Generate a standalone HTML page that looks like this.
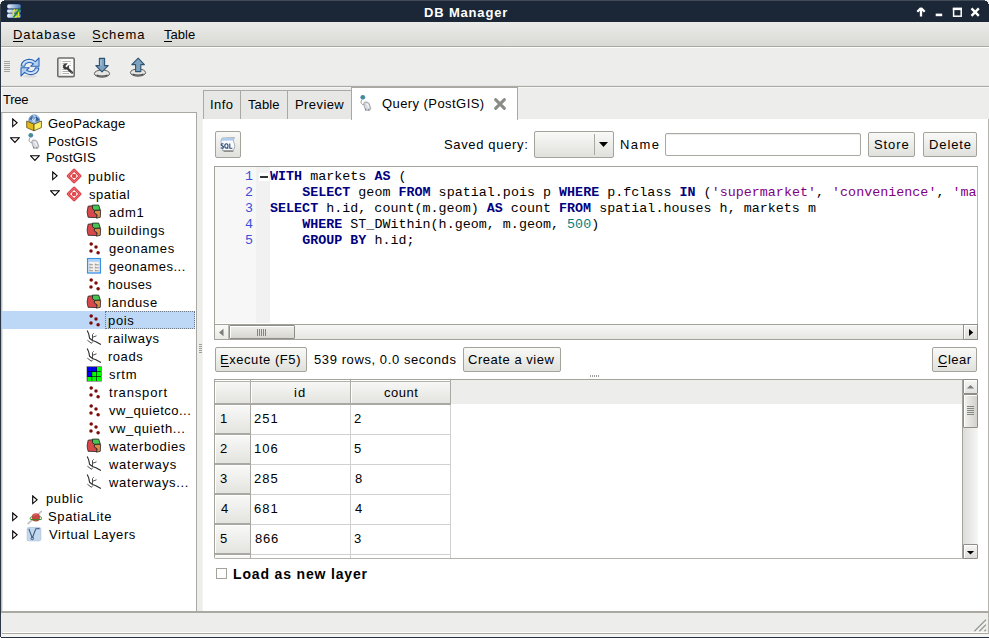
<!DOCTYPE html>
<html><head><meta charset="utf-8">
<style>
*{margin:0;padding:0;box-sizing:border-box}
html,body{width:989px;height:638px;overflow:hidden;background:#ededec}
body{position:relative;font-family:"Liberation Sans",sans-serif;font-size:13px;color:#000}
.a{position:absolute}
.t{position:absolute;white-space:pre;line-height:16px;font-size:13px}
.code{position:absolute;white-space:pre;line-height:16px;font-family:"Liberation Mono",monospace;font-size:13.33px;color:#000}
.btn{position:absolute;border:1px solid #a3a29b;border-radius:2px;background:linear-gradient(#f9f9f8,#e0e0dc)}
.kw{color:#00007f;font-weight:bold}
.str{color:#7f007f}
.num{color:#007f7f}
.ul{position:absolute;height:1px;background:#000}
</style></head><body>

<div class="a" style="left:0;top:0;width:989px;height:22px;background:#1b2637"></div>
<div class="a" style="left:2px;top:0;width:985px;height:1px;background:#424b57"></div>
<div class="t" style="left:424px;top:5px;font-weight:bold;color:#fff;letter-spacing:0.83px">DB Manager</div>
<svg class="a" style="left:6px;top:3px" width="16" height="16" viewBox="0 0 16 16">
 <defs><linearGradient id="dg" x1="0" x2="1" y1="0" y2="0"><stop offset="0" stop-color="#f4f7fc"/><stop offset="0.5" stop-color="#9fb8dc"/><stop offset="1" stop-color="#4f7cb8"/></linearGradient></defs>
 <rect x="0.6" y="0.8" width="14.8" height="14.6" rx="2.2" fill="#0c2b5c"/>
 <rect x="1.2" y="1.3" width="13.6" height="4.3" rx="1.8" fill="url(#dg)"/>
 <rect x="1.2" y="6.4" width="13.6" height="3.4" rx="1.2" fill="url(#dg)"/>
 <rect x="1.2" y="10.6" width="13.6" height="4.2" rx="1.6" fill="url(#dg)"/>
 <path d="M9 6.4 C7 7.4 6.6 11.6 8.2 13.6 C9.2 14.4 10.4 13.8 11 13" stroke="#e6e630" stroke-width="1.7" fill="none"/>
 <path d="M10.4 6.8 C12.4 7.2 13.2 10.8 12.2 13.2 L13.6 14.2" stroke="#e6e630" stroke-width="1.5" fill="none"/>
 <path d="M7.6 14.2 L14.2 5" stroke="#1f8a1f" stroke-width="1.5"/>
</svg>
<svg class="a" style="left:914px;top:5px" width="70" height="14" viewBox="0 0 70 14">
 <path d="M7 3 L3.3 6.8 M7 3 L10.7 6.8 M7 3.5 V11.5" stroke="#fff" stroke-width="2.3" fill="none"/>
 <rect x="21.7" y="8.6" width="6.5" height="2.6" fill="#fff"/>
 <rect x="39.6" y="3.6" width="7.6" height="7.6" fill="none" stroke="#fff" stroke-width="1.5"/>
 <rect x="38.8" y="2.7" width="9.2" height="2.4" fill="#fff"/>
 <path d="M57.5 3.3 L64.8 10.8 M64.8 3.3 L57.5 10.8" stroke="#fff" stroke-width="2.4"/>
</svg>
<div class="a" style="left:0;top:22px;width:1px;height:616px;background:#2b3647"></div>
<div class="a" style="left:0;top:637px;width:989px;height:1px;background:#263243"></div>
<div class="a" style="left:0;top:637px;width:1px;height:1px;background:#f0f0f0"></div>
<div class="a" style="left:0;top:0;width:4px;height:1px;background:#f2f2f2"></div><div class="a" style="left:0;top:1px;width:2px;height:1px;background:#f2f2f2"></div><div class="a" style="left:0;top:2px;width:1px;height:2px;background:#e8e8e8"></div>
<div class="a" style="left:985px;top:0;width:4px;height:1px;background:#f2f2f2"></div><div class="a" style="left:987px;top:1px;width:2px;height:1px;background:#f2f2f2"></div><div class="a" style="left:988px;top:2px;width:1px;height:2px;background:#e8e8e8"></div>
<div class="a" style="left:0;top:4px;width:1px;height:18px;background:#3a424e"></div>
<div class="a" style="left:1px;top:22px;width:988px;height:24px;background:linear-gradient(#ebebe9,#d9d9d5)"></div>
<div class="a" style="left:1px;top:46px;width:988px;height:1px;background:#a9a8a1"></div>
<div class="a" style="left:1px;top:47px;width:988px;height:1px;background:#fdfdfc"></div>
<div class="t" style="left:13px;top:27px;letter-spacing:0.96px">Database</div>
<div class="t" style="left:92px;top:27px;letter-spacing:0.96px">Schema</div>
<div class="t" style="left:164px;top:27px;letter-spacing:0.02px">Table</div>
<div class="ul" style="left:13px;top:41px;width:10px"></div>
<div class="ul" style="left:93px;top:41px;width:9px"></div>
<div class="ul" style="left:164px;top:41px;width:8px"></div>
<div class="a" style="left:1px;top:85px;width:988px;height:1px;background:#e4e4e2"></div>
<div class="a" style="left:1px;top:86px;width:988px;height:1px;background:#abaaa4"></div>
<div class="a" style="left:1px;top:87px;width:988px;height:1px;background:#f6f6f5"></div>
<svg class="a" style="left:4px;top:61px" width="7" height="11" viewBox="0 0 7 11">
 <path d="M0 .5H6M0 2.5H6M0 4.5H6M0 6.5H6M0 8.5H6M0 10.5H6" stroke="#a3a39f" stroke-width="1"/>
</svg>
<svg class="a" style="left:20px;top:57px" width="20" height="21" viewBox="0 0 20 21">
 <ellipse cx="10" cy="19.3" rx="7" ry="1.3" fill="#000" opacity="0.08"/>
 <path d="M1.2 9 C1.4 3.2 9 0 15.4 4.6 L19 1 L19 9.2 L10.8 9.2 L13.4 6.8 C9 4.2 5 5.8 4.6 9.2 Z" fill="#b3d0ef" stroke="#2a64b8" stroke-width="1.1" stroke-linejoin="round"/>
 <path d="M18.8 11 C18.6 16.8 11 20 4.6 15.4 L1 19 L1 10.8 L9.2 10.8 L6.6 13.2 C11 15.8 15 14.2 15.4 10.8 Z" fill="#b3d0ef" stroke="#2a64b8" stroke-width="1.1" stroke-linejoin="round"/>
 <path d="M3 7.6 C4 4 9 2.4 13.5 4.6" stroke="#fff" stroke-width="0.9" fill="none" opacity="0.8"/>
 <path d="M17 12.4 C16 16 11 17.6 6.5 15.4" stroke="#fff" stroke-width="0.9" fill="none" opacity="0.8"/>
</svg>
<svg class="a" style="left:56px;top:57px" width="20" height="21" viewBox="0 0 20 21">
 <rect x="1.8" y="1" width="16.4" height="18.6" rx="1.2" fill="#fdfdfd" stroke="#6d6d69" stroke-width="1.6"/>
 <rect x="3.2" y="2.4" width="2.2" height="15.8" fill="#e6e6e4"/>
 <path d="M6.4 4.5H14.8M6.4 6.5H14.8M6.4 8.5H14.8M6.4 10.5H10M6.4 12.5H10M6.4 14.5H14.8M6.4 16.5H13" stroke="#a9a9a5" stroke-width="0.9"/>
 <path d="M10.6 10.6 L16 15.6" stroke="#3c3c3c" stroke-width="2.4" stroke-linecap="round"/>
 <circle cx="10" cy="9.6" r="3" fill="#3c3c3c"/>
 <path d="M10.4 9.2 L13.6 6" stroke="#fdfdfd" stroke-width="1.8" stroke-linecap="round"/>
 <path d="M15 15.2 L15.8 16" stroke="#777" stroke-width="1.2"/>
</svg>
<svg class="a" style="left:93px;top:57px" width="18" height="21" viewBox="0 0 18 21">
 <ellipse cx="9" cy="16.6" rx="7.6" ry="3.6" fill="#e6e6e4" stroke="#5a5a58" stroke-width="1"/>
 <path d="M3.5 18 C6 19.6 12 19.6 14.6 18" stroke="#4a4a48" stroke-width="1.2" fill="none"/>
 <path d="M6.4 1.4H11.6V8.6H15.2L9 14.8L2.8 8.6H6.4Z" fill="#7ea1be" stroke="#2f5372" stroke-width="1.1" stroke-linejoin="round"/>
 <path d="M8 2.6V8.6" stroke="#b8d0e2" stroke-width="1"/>
</svg>
<svg class="a" style="left:129px;top:57px" width="18" height="21" viewBox="0 0 18 21">
 <ellipse cx="9" cy="15.6" rx="7.6" ry="3.6" fill="#e6e6e4" stroke="#5a5a58" stroke-width="1"/>
 <path d="M3.5 17 C6 18.6 12 18.6 14.6 17" stroke="#4a4a48" stroke-width="1.2" fill="none"/>
 <path d="M6.6 14.6H11.8V7.6H15.4L9.2 1.2L2.8 7.6H6.6Z" fill="#7ea1be" stroke="#2f5372" stroke-width="1.1" stroke-linejoin="round"/>
</svg>
<div class="a" style="left:1px;top:87px;width:1px;height:526px;background:#fbfbfa"></div>
<div class="t" style="left:3px;top:92px;letter-spacing:-0.23px">Tree</div>
<div class="a" style="left:1px;top:112px;width:196px;height:499px;background:#fff;border:1px solid #a9a8a2;border-left:1px solid #c2c2bb;border-bottom:none;box-shadow:inset 1px 0 0 #e4e4e1"></div>
<div class="a" style="left:2px;top:311px;width:193px;height:18px;background:#bcd8f6"></div>
<div class="a" style="left:105px;top:311px;width:90px;height:18px;border:1px dotted #6a7888"></div>
<svg class="a" style="left:12px;top:118px" width="7" height="10" viewBox="0 0 7 10"><path d="M0.7 1 L5.1 4.8 L0.7 8.6Z" fill="#fff" stroke="#000" stroke-width="1.1" stroke-linejoin="miter"/></svg>
<svg class="a" style="left:26px;top:114px" width="16" height="18" viewBox="0 0 16 18"><circle cx="8.2" cy="6.2" r="5.4" fill="#86aad6" stroke="#4a6e9e" stroke-width="0.6"/>
<path d="M4.4 3.2 L9.2 8.6 M11.6 2.4 L6.8 7.8 M7.2 1 L12.6 5" stroke="#e9f1fa" stroke-width="0.9"/>
<path d="M9.4 2.4 C11 2.6 12.8 4 13.2 6 L10.6 7.6Z" fill="#2c5c9c"/>
<path d="M3.4 5.4 C4 3.6 5.4 2.2 6.8 1.8 L5.8 6Z" fill="#3a6aaa"/>
<path d="M0.7 7 L8 10.2 L8 16.8 L0.7 13.6Z" fill="#e3b81c" stroke="#5a4a0c" stroke-width="0.8" stroke-linejoin="round"/>
<path d="M8 10.2 L15.4 7 L15.4 13.6 L8 16.8Z" fill="#fbef6e" stroke="#5a4a0c" stroke-width="0.8" stroke-linejoin="round"/></svg>
<div class="t" style="left:48px;top:116px;letter-spacing:0.23px">GeoPackage</div>
<svg class="a" style="left:10px;top:137px" width="10" height="7" viewBox="0 0 10 7"><path d="M0.6 0.8 L9.2 0.8 L4.9 5.4Z" fill="#fff" stroke="#000" stroke-width="1.1"/></svg>
<svg class="a" style="left:26px;top:132px" width="16" height="18" viewBox="0 0 16 18"><circle cx="4.8" cy="3.3" r="2.4" fill="#4c86b8"/>
<path d="M3.6 2.6 C4.4 2.1 5.4 2.3 6 3 L5 4.2Z" fill="#3aa04a"/>
<path d="M4 6 C2.5 7 2.8 9.6 4.5 10.5 C5.5 11 6 10 6.3 9.5" stroke="#8c8f96" stroke-width="0.9" fill="none"/>
<path d="M6.2 8.4 C8 7.6 10.6 8 11.2 9.8 L12.8 14.8 C12.4 16.2 10 16.6 7.8 16 L6.8 13.8 C6 12 5.6 10 6.2 8.4Z" fill="#d8dadf" stroke="#8d9098" stroke-width="0.8"/>
<path d="M8.4 10 C9.8 10.6 10.6 12 10.2 13.6" stroke="#f6f6f8" stroke-width="1.2" fill="none"/>
<path d="M7.4 14.6 L7.8 16.6 M10.6 15 L11 16.6" stroke="#7d8088" stroke-width="1"/></svg>
<div class="t" style="left:48px;top:134px;letter-spacing:0.20px">PostGIS</div>
<svg class="a" style="left:30px;top:155px" width="10" height="7" viewBox="0 0 10 7"><path d="M0.6 0.8 L9.2 0.8 L4.9 5.4Z" fill="#fff" stroke="#000" stroke-width="1.1"/></svg>
<div class="t" style="left:46px;top:150px;letter-spacing:0.20px">PostGIS</div>
<svg class="a" style="left:52px;top:171px" width="7" height="10" viewBox="0 0 7 10"><path d="M0.7 1 L5.1 4.8 L0.7 8.6Z" fill="#fff" stroke="#000" stroke-width="1.1" stroke-linejoin="miter"/></svg>
<svg class="a" style="left:66px;top:167px" width="16" height="18" viewBox="0 0 16 18"><path d="M8.1 3 L14.1 9 L8.1 15 L2.1 9Z" fill="none" stroke="#d8444a" stroke-width="2.7" stroke-linejoin="round"/>
<path d="M8.1 3 L14.1 9 L8.1 15 L2.1 9Z" fill="none" stroke="#ff7c80" stroke-width="0.7" stroke-linejoin="round"/>
<rect x="6" y="6.9" width="4.2" height="4.2" rx="1.4" fill="#e0484e"/></svg>
<div class="t" style="left:88px;top:169px;letter-spacing:0.61px">public</div>
<svg class="a" style="left:50px;top:190px" width="10" height="7" viewBox="0 0 10 7"><path d="M0.6 0.8 L9.2 0.8 L4.9 5.4Z" fill="#fff" stroke="#000" stroke-width="1.1"/></svg>
<svg class="a" style="left:66px;top:185px" width="16" height="18" viewBox="0 0 16 18"><path d="M8.1 3 L14.1 9 L8.1 15 L2.1 9Z" fill="none" stroke="#d8444a" stroke-width="2.7" stroke-linejoin="round"/>
<path d="M8.1 3 L14.1 9 L8.1 15 L2.1 9Z" fill="none" stroke="#ff7c80" stroke-width="0.7" stroke-linejoin="round"/>
<rect x="6" y="6.9" width="4.2" height="4.2" rx="1.4" fill="#e0484e"/></svg>
<div class="t" style="left:89px;top:187px;letter-spacing:0.53px">spatial</div>
<svg class="a" style="left:86px;top:203px" width="16" height="18" viewBox="0 0 16 18"><path d="M2.1 3.2 L6.5 2.7 L6.8 5.8 L8.7 7.4 L8.3 9.9 L10.9 11.8 L10.9 14.6 L2.1 14.3 L1.1 9.3Z" fill="#d9474a" stroke="#222" stroke-width="0.8" stroke-linejoin="round"/>
<path d="M6.5 2.1 L12.7 2.1 L14.3 7.1 L8.7 7.4 L6.5 5.8Z" fill="#47c451" stroke="#222" stroke-width="0.8" stroke-linejoin="round"/>
<path d="M8.7 7.4 L14.6 7.4 L14.3 14.3 L10.5 15.2 L11.2 11.8 L8.3 9.9Z" fill="#dc8a47" stroke="#222" stroke-width="0.8" stroke-linejoin="round"/></svg>
<div class="t" style="left:109px;top:205px;letter-spacing:0.72px">adm1</div>
<svg class="a" style="left:86px;top:221px" width="16" height="18" viewBox="0 0 16 18"><path d="M2.1 3.2 L6.5 2.7 L6.8 5.8 L8.7 7.4 L8.3 9.9 L10.9 11.8 L10.9 14.6 L2.1 14.3 L1.1 9.3Z" fill="#d9474a" stroke="#222" stroke-width="0.8" stroke-linejoin="round"/>
<path d="M6.5 2.1 L12.7 2.1 L14.3 7.1 L8.7 7.4 L6.5 5.8Z" fill="#47c451" stroke="#222" stroke-width="0.8" stroke-linejoin="round"/>
<path d="M8.7 7.4 L14.6 7.4 L14.3 14.3 L10.5 15.2 L11.2 11.8 L8.3 9.9Z" fill="#dc8a47" stroke="#222" stroke-width="0.8" stroke-linejoin="round"/></svg>
<div class="t" style="left:108px;top:223px;letter-spacing:0.66px">buildings</div>
<svg class="a" style="left:86px;top:239px" width="16" height="18" viewBox="0 0 16 18"><circle cx="5.2" cy="4.9" r="1.75" fill="#7d0a0a"/><circle cx="10" cy="8" r="1.75" fill="#7d0a0a"/>
<circle cx="5" cy="12.1" r="1.75" fill="#7d0a0a"/><circle cx="12.1" cy="13.7" r="1.75" fill="#7d0a0a"/></svg>
<div class="t" style="left:109px;top:241px;letter-spacing:0.64px">geonames</div>
<svg class="a" style="left:86px;top:257px" width="16" height="18" viewBox="0 0 16 18"><rect x="1.6" y="1.6" width="12.8" height="14.4" fill="#f4f1ee" stroke="#3592e6" stroke-width="1.3"/>
<rect x="2.2" y="2.2" width="11.6" height="2.6" fill="#a9d0f6"/>
<path d="M3.2 7.8H7M3.2 10.8H7M3.2 13.8H7M8.8 7.8H12.8M8.8 10.8H12.8M8.8 13.8H12.8" stroke="#8b8b8b" stroke-width="0.9"/>
<path d="M4 6.6V7.8M4 9.6V10.8M4 12.6V13.8M9.6 6.6V7.8M9.6 9.6V10.8M9.6 12.6V13.8" stroke="#8b8b8b" stroke-width="0.8"/></svg>
<div class="t" style="left:109px;top:259px;letter-spacing:0.47px">geonames...</div>
<svg class="a" style="left:86px;top:275px" width="16" height="18" viewBox="0 0 16 18"><circle cx="5.2" cy="4.9" r="1.75" fill="#7d0a0a"/><circle cx="10" cy="8" r="1.75" fill="#7d0a0a"/>
<circle cx="5" cy="12.1" r="1.75" fill="#7d0a0a"/><circle cx="12.1" cy="13.7" r="1.75" fill="#7d0a0a"/></svg>
<div class="t" style="left:108px;top:277px;letter-spacing:0.37px">houses</div>
<svg class="a" style="left:86px;top:293px" width="16" height="18" viewBox="0 0 16 18"><path d="M2.1 3.2 L6.5 2.7 L6.8 5.8 L8.7 7.4 L8.3 9.9 L10.9 11.8 L10.9 14.6 L2.1 14.3 L1.1 9.3Z" fill="#d9474a" stroke="#222" stroke-width="0.8" stroke-linejoin="round"/>
<path d="M6.5 2.1 L12.7 2.1 L14.3 7.1 L8.7 7.4 L6.5 5.8Z" fill="#47c451" stroke="#222" stroke-width="0.8" stroke-linejoin="round"/>
<path d="M8.7 7.4 L14.6 7.4 L14.3 14.3 L10.5 15.2 L11.2 11.8 L8.3 9.9Z" fill="#dc8a47" stroke="#222" stroke-width="0.8" stroke-linejoin="round"/></svg>
<div class="t" style="left:108px;top:295px;letter-spacing:0.60px">landuse</div>
<svg class="a" style="left:86px;top:311px" width="16" height="18" viewBox="0 0 16 18"><circle cx="5.2" cy="4.9" r="1.75" fill="#7d0a0a"/><circle cx="10" cy="8" r="1.75" fill="#7d0a0a"/>
<circle cx="5" cy="12.1" r="1.75" fill="#7d0a0a"/><circle cx="12.1" cy="13.7" r="1.75" fill="#7d0a0a"/></svg>
<div class="t" style="left:108px;top:313px;letter-spacing:0.65px">pois</div>
<svg class="a" style="left:86px;top:329px" width="16" height="18" viewBox="0 0 16 18"><path d="M1.2 1.5 L2.7 4.9 L3.6 9.3 L6.5 11.5 L9.9 12.7 L14.9 15.6" stroke="#2a2a2a" stroke-width="1.1" fill="none" stroke-linejoin="round"/>
<path d="M6.5 11.5 L6.5 5.5 L7.7 4.3 M6.5 8.3 L10.5 6.8 M1.4 11.2 L5.5 14.3 L6.5 12.7" stroke="#444" stroke-width="0.95" fill="none"/></svg>
<div class="t" style="left:108px;top:331px;letter-spacing:0.59px">railways</div>
<svg class="a" style="left:86px;top:347px" width="16" height="18" viewBox="0 0 16 18"><path d="M1.2 1.5 L2.7 4.9 L3.6 9.3 L6.5 11.5 L9.9 12.7 L14.9 15.6" stroke="#2a2a2a" stroke-width="1.1" fill="none" stroke-linejoin="round"/>
<path d="M6.5 11.5 L6.5 5.5 L7.7 4.3 M6.5 8.3 L10.5 6.8 M1.4 11.2 L5.5 14.3 L6.5 12.7" stroke="#444" stroke-width="0.95" fill="none"/></svg>
<div class="t" style="left:108px;top:349px;letter-spacing:0.53px">roads</div>
<svg class="a" style="left:86px;top:365px" width="16" height="18" viewBox="0 0 16 18"><rect x="0.9" y="1.5" width="14.6" height="14.8" fill="#000" stroke="#9a8f9a" stroke-width="0.6"/>
<rect x="1.4" y="2" width="4.2" height="4.4" fill="#0000ff"/><rect x="6.2" y="2" width="4.2" height="4.4" fill="#0000ff"/><rect x="11" y="2" width="4.2" height="4.4" fill="#00ff00"/>
<rect x="1.4" y="7" width="4.2" height="4.4" fill="#0000ff"/><rect x="6.2" y="7" width="4.2" height="4.4" fill="#00ff00"/><rect x="11" y="7" width="4.2" height="4.4" fill="#00ff00"/>
<rect x="1.4" y="12" width="4.2" height="4" fill="#00ff00"/><rect x="6.2" y="12" width="4.2" height="4" fill="#00ff00"/><rect x="11" y="12" width="4.2" height="4" fill="#00ff00"/></svg>
<div class="t" style="left:109px;top:367px;letter-spacing:0.74px">srtm</div>
<svg class="a" style="left:86px;top:383px" width="16" height="18" viewBox="0 0 16 18"><circle cx="5.2" cy="4.9" r="1.75" fill="#7d0a0a"/><circle cx="10" cy="8" r="1.75" fill="#7d0a0a"/>
<circle cx="5" cy="12.1" r="1.75" fill="#7d0a0a"/><circle cx="12.1" cy="13.7" r="1.75" fill="#7d0a0a"/></svg>
<div class="t" style="left:109px;top:385px;letter-spacing:0.84px">transport</div>
<svg class="a" style="left:86px;top:401px" width="16" height="18" viewBox="0 0 16 18"><circle cx="5.2" cy="4.9" r="1.75" fill="#7d0a0a"/><circle cx="10" cy="8" r="1.75" fill="#7d0a0a"/>
<circle cx="5" cy="12.1" r="1.75" fill="#7d0a0a"/><circle cx="12.1" cy="13.7" r="1.75" fill="#7d0a0a"/></svg>
<div class="t" style="left:109px;top:403px;letter-spacing:0.49px">vw_quietco...</div>
<svg class="a" style="left:86px;top:419px" width="16" height="18" viewBox="0 0 16 18"><circle cx="5.2" cy="4.9" r="1.75" fill="#7d0a0a"/><circle cx="10" cy="8" r="1.75" fill="#7d0a0a"/>
<circle cx="5" cy="12.1" r="1.75" fill="#7d0a0a"/><circle cx="12.1" cy="13.7" r="1.75" fill="#7d0a0a"/></svg>
<div class="t" style="left:109px;top:421px;letter-spacing:0.59px">vw_quieth...</div>
<svg class="a" style="left:86px;top:437px" width="16" height="18" viewBox="0 0 16 18"><path d="M2.1 3.2 L6.5 2.7 L6.8 5.8 L8.7 7.4 L8.3 9.9 L10.9 11.8 L10.9 14.6 L2.1 14.3 L1.1 9.3Z" fill="#d9474a" stroke="#222" stroke-width="0.8" stroke-linejoin="round"/>
<path d="M6.5 2.1 L12.7 2.1 L14.3 7.1 L8.7 7.4 L6.5 5.8Z" fill="#47c451" stroke="#222" stroke-width="0.8" stroke-linejoin="round"/>
<path d="M8.7 7.4 L14.6 7.4 L14.3 14.3 L10.5 15.2 L11.2 11.8 L8.3 9.9Z" fill="#dc8a47" stroke="#222" stroke-width="0.8" stroke-linejoin="round"/></svg>
<div class="t" style="left:109px;top:439px;letter-spacing:0.62px">waterbodies</div>
<svg class="a" style="left:86px;top:455px" width="16" height="18" viewBox="0 0 16 18"><path d="M1.2 1.5 L2.7 4.9 L3.6 9.3 L6.5 11.5 L9.9 12.7 L14.9 15.6" stroke="#2a2a2a" stroke-width="1.1" fill="none" stroke-linejoin="round"/>
<path d="M6.5 11.5 L6.5 5.5 L7.7 4.3 M6.5 8.3 L10.5 6.8 M1.4 11.2 L5.5 14.3 L6.5 12.7" stroke="#444" stroke-width="0.95" fill="none"/></svg>
<div class="t" style="left:109px;top:457px;letter-spacing:0.72px">waterways</div>
<svg class="a" style="left:86px;top:473px" width="16" height="18" viewBox="0 0 16 18"><path d="M1.2 1.5 L2.7 4.9 L3.6 9.3 L6.5 11.5 L9.9 12.7 L14.9 15.6" stroke="#2a2a2a" stroke-width="1.1" fill="none" stroke-linejoin="round"/>
<path d="M6.5 11.5 L6.5 5.5 L7.7 4.3 M6.5 8.3 L10.5 6.8 M1.4 11.2 L5.5 14.3 L6.5 12.7" stroke="#444" stroke-width="0.95" fill="none"/></svg>
<div class="t" style="left:109px;top:475px;letter-spacing:0.65px">waterways...</div>
<svg class="a" style="left:32px;top:495px" width="7" height="10" viewBox="0 0 7 10"><path d="M0.7 1 L5.1 4.8 L0.7 8.6Z" fill="#fff" stroke="#000" stroke-width="1.1" stroke-linejoin="miter"/></svg>
<div class="t" style="left:46px;top:491px;letter-spacing:0.61px">public</div>
<svg class="a" style="left:12px;top:512px" width="7" height="10" viewBox="0 0 7 10"><path d="M0.7 1 L5.1 4.8 L0.7 8.6Z" fill="#fff" stroke="#000" stroke-width="1.1" stroke-linejoin="miter"/></svg>
<svg class="a" style="left:26px;top:508px" width="16" height="18" viewBox="0 0 16 18"><path d="M1.6 16.2 L15.8 3" stroke="#c4c4c4" stroke-width="1.8"/>
<circle cx="9.9" cy="9.4" r="4.1" fill="#c94646"/>
<path d="M7.4 8 C8 6.6 9.6 6 11 6.6" stroke="#e07070" stroke-width="1" fill="none"/>
<path d="M4.1 10.4 C4.1 12.2 15.9 12.2 15.9 10.4" fill="none" stroke="#2b8a1e" stroke-width="1.1"/>
<path d="M4.1 10.4 C4.1 9.2 6 8.6 6.4 8.6 M15.9 10.4 C15.9 9.2 14 8.6 13.4 8.6" fill="none" stroke="#2b8a1e" stroke-width="1"/></svg>
<div class="t" style="left:48px;top:509px;letter-spacing:0.62px">SpatiaLite</div>
<svg class="a" style="left:12px;top:530px" width="7" height="10" viewBox="0 0 7 10"><path d="M0.7 1 L5.1 4.8 L0.7 8.6Z" fill="#fff" stroke="#000" stroke-width="1.1" stroke-linejoin="miter"/></svg>
<svg class="a" style="left:26px;top:526px" width="16" height="18" viewBox="0 0 16 18"><rect x="1.2" y="1.4" width="13.6" height="13.4" rx="1.6" fill="#c4d8ee" stroke="#adc3dc" stroke-width="0.8"/>
<path d="M2.8 2.8 L6.3 12 M9.8 2.8 L6.3 12 M9.8 2.8 L13.6 2.6" stroke="#3f5f86" stroke-width="1.1" fill="none"/>
<circle cx="6.3" cy="12.4" r="1.3" fill="none" stroke="#3f5f86" stroke-width="1"/></svg>
<div class="t" style="left:49px;top:527px;letter-spacing:0.54px">Virtual Layers</div>
<svg class="a" style="left:199px;top:344px" width="3" height="10" viewBox="0 0 3 10"><path d="M0 .5H3M0 2.5H3M0 4.5H3M0 6.5H3M0 8.5H3" stroke="#9d9d99"/></svg>
<div class="a" style="left:202px;top:119px;width:787px;height:492px;background:#fff;border-right:1px solid #b5b4ae;border-left:1px solid #f4f4f3"></div>
<div class="a" style="left:1px;top:611px;width:988px;height:2px;background:#a9a8a2"></div>
<div class="a" style="left:988px;top:613px;width:1px;height:21px;background:#b5b4ae"></div>
<div class="a" style="left:203px;top:90px;width:38px;height:29px;background:#e7e7e5;border:1px solid #a9a8a2;border-bottom:none"></div>
<div class="a" style="left:240px;top:90px;width:48px;height:29px;background:#e7e7e5;border:1px solid #a9a8a2;border-bottom:none"></div>
<div class="a" style="left:287px;top:90px;width:65px;height:29px;background:#e7e7e5;border:1px solid #a9a8a2;border-bottom:none"></div>
<div class="a" style="left:351px;top:87px;width:167px;height:33px;background:#fff;border:1px solid #a9a8a2;border-bottom:none"></div>
<div class="t" style="left:210px;top:97px;letter-spacing:0.43px">Info</div>
<div class="t" style="left:248px;top:97px;letter-spacing:0.08px">Table</div>
<div class="t" style="left:295px;top:97px;letter-spacing:0.42px">Preview</div>
<div class="t" style="left:382px;top:96px;letter-spacing:0.43px">Query (PostGIS)</div>
<svg class="a" style="left:358px;top:94px" width="16" height="18" viewBox="0 0 16 18"><circle cx="4.8" cy="3.3" r="2.4" fill="#4c86b8"/>
<path d="M3.6 2.6 C4.4 2.1 5.4 2.3 6 3 L5 4.2Z" fill="#3aa04a"/>
<path d="M4 6 C2.5 7 2.8 9.6 4.5 10.5 C5.5 11 6 10 6.3 9.5" stroke="#8c8f96" stroke-width="0.9" fill="none"/>
<path d="M6.2 8.4 C8 7.6 10.6 8 11.2 9.8 L12.8 14.8 C12.4 16.2 10 16.6 7.8 16 L6.8 13.8 C6 12 5.6 10 6.2 8.4Z" fill="#d8dadf" stroke="#8d9098" stroke-width="0.8"/>
<path d="M8.4 10 C9.8 10.6 10.6 12 10.2 13.6" stroke="#f6f6f8" stroke-width="1.2" fill="none"/>
<path d="M7.4 14.6 L7.8 16.6 M10.6 15 L11 16.6" stroke="#7d8088" stroke-width="1"/></svg>
<svg class="a" style="left:493px;top:97px" width="14" height="14" viewBox="0 0 14 14"><path d="M2.6 2.6 L11.4 11.4 M11.4 2.6 L2.6 11.4" stroke="#8a8a87" stroke-width="3" stroke-linecap="round"/></svg>
<div class="btn" style="left:215px;top:131px;width:26px;height:27px"></div>
<svg class="a" style="left:219px;top:136px" width="18" height="17" viewBox="0 0 18 17">
<path d="M3.2 2 L15.4 1.6 C14.2 3.4 14.2 5.2 15.2 7.2 C16.2 9.4 15.8 12 14.2 14.4 L3.4 14.6 C4.6 12.2 4 10.2 2.6 8.6 C1.6 6.6 2 4 3.2 2Z" fill="#fbfcfe" stroke="#8a8c92" stroke-width="0.7"/>
<path d="M3.3 2.2 L15 1.9 C14.6 2.6 14.4 3.5 14.3 4.6 L2.6 4.8 C2.7 3.8 2.9 3 3.3 2.2Z" fill="#a9cbef"/>
<path d="M4.6 15.3 H14.4" stroke="#6e6e6e" stroke-width="0.9"/>
<path d="M4.5 8.2 C3.8 7.5 2.1 7.5 2.1 8.7 C2.1 9.9 4.5 9.7 4.5 11.1 C4.5 12.5 2.5 12.5 1.8 11.7" stroke="#244a7e" stroke-width="1.1" fill="none"/>
<ellipse cx="7.4" cy="10" rx="1.6" ry="2.2" stroke="#244a7e" stroke-width="1.1" fill="none"/>
<path d="M8 11.6 L9.2 12.9" stroke="#244a7e" stroke-width="1"/>
<path d="M10.8 7.6 V12.2 H13.4" stroke="#244a7e" stroke-width="1.1" fill="none"/>
</svg>
<div class="t" style="left:444px;top:137px;letter-spacing:0.65px">Saved query:</div>
<div class="btn" style="left:534px;top:131px;width:80px;height:27px"></div>
<div class="a" style="left:594px;top:134px;width:1px;height:21px;background:#a8a7a1"></div>
<svg class="a" style="left:598px;top:141px" width="11" height="7" viewBox="0 0 11 7"><path d="M1 1 H10 L5.5 6Z" fill="#000"/></svg>
<div class="t" style="left:620px;top:137px;letter-spacing:1.47px">Name</div>
<div class="a" style="left:665px;top:133px;width:196px;height:23px;background:#fff;border:1px solid #a9a8a2;border-radius:2px;box-shadow:inset 0 1px 1px rgba(0,0,0,0.08)"></div>
<div class="btn" style="left:868px;top:132px;width:47px;height:25px"></div>
<div class="t" style="left:874px;top:137px;letter-spacing:0.92px">Store</div>
<div class="btn" style="left:923px;top:132px;width:54px;height:25px"></div>
<div class="t" style="left:929px;top:137px;letter-spacing:0.90px">Delete</div>
<div class="a" style="left:214px;top:166px;width:764px;height:174px;background:#fff;border:1px solid #a3a29b;border-right-color:#b9b8b2;border-bottom-color:#b9b8b2"></div>
<div class="a" style="left:215px;top:167px;width:41px;height:156px;background:#f7f7f7"></div>
<div class="a" style="left:256px;top:167px;width:14px;height:156px;background:#f1f1f1"></div>
<div class="code" style="left:245px;top:169px;color:#3b4fd9">1</div>
<div class="code" style="left:245px;top:185px;color:#3b4fd9">2</div>
<div class="code" style="left:245px;top:201px;color:#3b4fd9">3</div>
<div class="code" style="left:245px;top:217px;color:#3b4fd9">4</div>
<div class="code" style="left:245px;top:233px;color:#3b4fd9">5</div>
<div class="a" style="left:259px;top:173px;width:10px;height:8px;background:#fff"></div>
<div class="a" style="left:260px;top:176px;width:8px;height:2px;background:#333"></div>
<div class="a" style="left:270px;top:167px;width:707px;height:156px;overflow:hidden">
<div class="code" style="left:0px;top:2px;letter-spacing:0.03px"><span class="kw">WITH</span> markets <span class="kw">AS</span> (</div>
<div class="code" style="left:0px;top:18px;letter-spacing:0.03px">    <span class="kw">SELECT</span> geom <span class="kw">FROM</span> spatial.pois p <span class="kw">WHERE</span> p.fclass <span class="kw">IN</span> (<span class="str">'supermarket'</span>, <span class="str">'convenience'</span>, <span class="str">'mall'</span>))</div>
<div class="code" style="left:0px;top:34px;letter-spacing:0.03px"><span class="kw">SELECT</span> h.id, count(m.geom) <span class="kw">AS</span> count <span class="kw">FROM</span> spatial.houses h, markets m</div>
<div class="code" style="left:0px;top:50px;letter-spacing:0.03px">    <span class="kw">WHERE</span> ST_DWithin(h.geom, m.geom, <span class="num">500</span>)</div>
<div class="code" style="left:0px;top:66px;letter-spacing:0.03px">    <span class="kw">GROUP</span> <span class="kw">BY</span> h.id;</div>
</div>
<div class="a" style="left:214px;top:324px;width:764px;height:16px;background:linear-gradient(#f7f7f6,#e6e6e3);border:1px solid #a3a29b"></div>
<div class="a" style="left:215px;top:325px;width:14px;height:14px;background:linear-gradient(#fafaf9,#e9e9e6);border-right:1px solid #b9b8b2"></div>
<svg class="a" style="left:218px;top:328px" width="7" height="9" viewBox="0 0 7 9"><path d="M5.5 0.8 V8.2 L1 4.5Z" fill="#7d7d7a"/></svg>
<div class="a" style="left:229px;top:325px;width:66px;height:14px;background:linear-gradient(#eeeeec,#d7d6d2);border:1px solid #8e8d87;border-radius:1px;box-shadow:inset 1px 1px 0 #fff"></div>
<svg class="a" style="left:257px;top:329px" width="10" height="7" viewBox="0 0 10 7"><path d="M.5 0V7M2.5 0V7M4.5 0V7M6.5 0V7M8.5 0V7" stroke="#858580"/></svg>
<div class="a" style="left:963px;top:324px;width:15px;height:16px;background:linear-gradient(#f2f2f0,#dcdbd8);border:1px solid #8f8e88;border-radius:1px;box-shadow:inset 1px 1px 0 #fff"></div>
<svg class="a" style="left:968px;top:328px" width="7" height="9" viewBox="0 0 7 9"><path d="M1 0.9 V8.1 L5.2 4.5Z" fill="#000"/></svg>
<div class="btn" style="left:215px;top:347px;width:92px;height:25px"></div>
<div class="t" style="left:220px;top:352px;letter-spacing:0.55px">Execute (F5)</div>
<div class="ul" style="left:221px;top:366px;width:8px"></div>
<div class="t" style="left:314px;top:352px;letter-spacing:0.59px">539 rows, 0.0 seconds</div>
<div class="btn" style="left:463px;top:347px;width:98px;height:25px"></div>
<div class="t" style="left:468px;top:352px;letter-spacing:0.54px">Create a view</div>
<div class="btn" style="left:932px;top:347px;width:45px;height:25px"></div>
<div class="t" style="left:938px;top:352px;letter-spacing:0.50px">Clear</div>
<div class="ul" style="left:938px;top:366px;width:9px"></div>
<svg class="a" style="left:590px;top:375px" width="10" height="2" viewBox="0 0 10 2"><path d="M0.5 0V2M2.5 0V2M4.5 0V2M6.5 0V2M8.5 0V2" stroke="#9d9d99"/></svg>
<div class="a" style="left:214px;top:379px;width:764px;height:180px;background:#fff;border:1px solid #a3a29b;border-right-color:#b9b8b2;border-bottom-color:#b3b2ac;border-radius:0 0 2px 2px"></div>
<div class="a" style="left:215px;top:380px;width:747px;height:24px;background:#ededec"></div>
<div class="a" style="left:215px;top:380px;width:36px;height:25px;background:linear-gradient(#f9f9f8,#e3e3df);border-right:1px solid #a9a8a2;border-bottom:2px solid #a9a8a2;box-shadow:inset 1px 1px 0 #fff"></div>
<div class="a" style="left:251px;top:380px;width:100px;height:25px;background:linear-gradient(#f9f9f8,#e3e3df);border-right:1px solid #a9a8a2;border-bottom:2px solid #a9a8a2;box-shadow:inset 1px 1px 0 #fff"></div>
<div class="a" style="left:351px;top:380px;width:100px;height:25px;background:linear-gradient(#f9f9f8,#e3e3df);border-right:1px solid #a9a8a2;border-bottom:2px solid #a9a8a2;box-shadow:inset 1px 1px 0 #fff"></div>
<div class="a" style="left:215px;top:381px;width:236px;height:1px;background:#b3b2ac"></div>
<div class="t" style="left:294px;top:385px;letter-spacing:1.00px">id</div>
<div class="t" style="left:384px;top:385px;letter-spacing:0.53px">count</div>
<div class="a" style="left:215px;top:405px;width:747px;height:153px;overflow:hidden">
<div class="a" style="left:0px;top:0px;width:36px;height:30px;background:linear-gradient(#f9f9f8,#e3e3df);border-right:1px solid #a9a8a2;border-bottom:2px solid #a9a8a2;box-shadow:inset 1px 1px 0 #fff"></div>
<div class="a" style="left:36px;top:0px;width:200px;height:30px;border-right:1px solid #d0d0d0;border-bottom:1px solid #d0d0d0"></div>
<div class="a" style="left:135px;top:0px;width:1px;height:30px;background:#d0d0d0"></div>
<div class="a" style="left:0px;top:30px;width:36px;height:30px;background:linear-gradient(#f9f9f8,#e3e3df);border-right:1px solid #a9a8a2;border-bottom:2px solid #a9a8a2;box-shadow:inset 1px 1px 0 #fff"></div>
<div class="a" style="left:36px;top:30px;width:200px;height:30px;border-right:1px solid #d0d0d0;border-bottom:1px solid #d0d0d0"></div>
<div class="a" style="left:135px;top:30px;width:1px;height:30px;background:#d0d0d0"></div>
<div class="a" style="left:0px;top:60px;width:36px;height:30px;background:linear-gradient(#f9f9f8,#e3e3df);border-right:1px solid #a9a8a2;border-bottom:2px solid #a9a8a2;box-shadow:inset 1px 1px 0 #fff"></div>
<div class="a" style="left:36px;top:60px;width:200px;height:30px;border-right:1px solid #d0d0d0;border-bottom:1px solid #d0d0d0"></div>
<div class="a" style="left:135px;top:60px;width:1px;height:30px;background:#d0d0d0"></div>
<div class="a" style="left:0px;top:90px;width:36px;height:30px;background:linear-gradient(#f9f9f8,#e3e3df);border-right:1px solid #a9a8a2;border-bottom:2px solid #a9a8a2;box-shadow:inset 1px 1px 0 #fff"></div>
<div class="a" style="left:36px;top:90px;width:200px;height:30px;border-right:1px solid #d0d0d0;border-bottom:1px solid #d0d0d0"></div>
<div class="a" style="left:135px;top:90px;width:1px;height:30px;background:#d0d0d0"></div>
<div class="a" style="left:0px;top:120px;width:36px;height:30px;background:linear-gradient(#f9f9f8,#e3e3df);border-right:1px solid #a9a8a2;border-bottom:2px solid #a9a8a2;box-shadow:inset 1px 1px 0 #fff"></div>
<div class="a" style="left:36px;top:120px;width:200px;height:30px;border-right:1px solid #d0d0d0;border-bottom:1px solid #d0d0d0"></div>
<div class="a" style="left:135px;top:120px;width:1px;height:30px;background:#d0d0d0"></div>
<div class="a" style="left:0px;top:150px;width:36px;height:30px;background:linear-gradient(#f9f9f8,#e3e3df);border-right:1px solid #a9a8a2;border-bottom:2px solid #a9a8a2;box-shadow:inset 1px 1px 0 #fff"></div>
<div class="a" style="left:36px;top:150px;width:200px;height:30px;border-right:1px solid #d0d0d0;border-bottom:1px solid #d0d0d0"></div>
<div class="a" style="left:135px;top:150px;width:1px;height:30px;background:#d0d0d0"></div>
</div>
<div class="t" style="left:220px;top:411px;letter-spacing:0.00px">1</div>
<div class="t" style="left:254px;top:411px;letter-spacing:1.03px">251</div>
<div class="t" style="left:354px;top:411px;letter-spacing:0.00px">2</div>
<div class="t" style="left:220px;top:441px;letter-spacing:0.00px">2</div>
<div class="t" style="left:254px;top:441px;letter-spacing:0.96px">106</div>
<div class="t" style="left:354px;top:441px;letter-spacing:0.00px">5</div>
<div class="t" style="left:220px;top:471px;letter-spacing:0.00px">3</div>
<div class="t" style="left:254px;top:471px;letter-spacing:1.03px">285</div>
<div class="t" style="left:355px;top:471px;letter-spacing:0.00px">8</div>
<div class="t" style="left:221px;top:501px;letter-spacing:0.00px">4</div>
<div class="t" style="left:254px;top:501px;letter-spacing:1.03px">681</div>
<div class="t" style="left:355px;top:501px;letter-spacing:0.00px">4</div>
<div class="t" style="left:220px;top:531px;letter-spacing:0.00px">5</div>
<div class="t" style="left:255px;top:531px;letter-spacing:0.71px">866</div>
<div class="t" style="left:354px;top:531px;letter-spacing:0.00px">3</div>
<div class="a" style="left:962px;top:380px;width:16px;height:178px;background:linear-gradient(90deg,#dcdcd9,#f6f6f5);border-left:1px solid #a3a29b"></div>
<div class="a" style="left:963px;top:379px;width:15px;height:15px;background:linear-gradient(#f6f6f5,#e2e2df);border:1px solid #8f8e88;border-radius:1px;box-shadow:inset 1px 1px 0 #fff"></div>
<svg class="a" style="left:966px;top:384px" width="9" height="6" viewBox="0 0 9 6"><path d="M0.9 4.6 H8.1 L4.5 0.9Z" fill="#7d7d7a"/></svg>
<div class="a" style="left:963px;top:394px;width:15px;height:34px;background:linear-gradient(90deg,#f2f2f0,#d2d1cd);border:1px solid #8e8d87;border-radius:1px;box-shadow:inset 1px 1px 0 #fff"></div>
<svg class="a" style="left:967px;top:406px" width="7" height="10" viewBox="0 0 7 10"><path d="M0 .5H7M0 2.5H7M0 4.5H7M0 6.5H7M0 8.5H7" stroke="#858580"/></svg>
<div class="a" style="left:963px;top:544px;width:15px;height:15px;background:linear-gradient(#f6f6f5,#dcdbd8);border:1px solid #8f8e88;border-radius:1px;box-shadow:inset 1px 1px 0 #fff"></div>
<svg class="a" style="left:966px;top:550px" width="9" height="6" viewBox="0 0 9 6"><path d="M0.9 0.9 H8.1 L4.5 4.6Z" fill="#000"/></svg>
<div class="a" style="left:216px;top:568px;width:11px;height:11px;background:#fff;border:1px solid #a3a29b"></div>
<div class="t" style="left:233px;top:566px;font-weight:bold;font-size:14px;letter-spacing:0.84px">Load as new layer</div>
<div class="a" style="left:3px;top:632px;width:985px;height:1px;background:#fcfcfb"></div>
<div class="a" style="left:2px;top:633px;width:986px;height:1px;background:#a9a8a2"></div>
<div class="a" style="left:1px;top:634px;width:988px;height:3px;background:#f4f4f3"></div>
<svg class="a" style="left:973px;top:619px" width="14" height="13" viewBox="0 0 14 13"><path d="M2.2 12.8 L13.6 1.4 M7.2 12.8 L13.6 6.4 M12.2 12.8 L13.6 11.4" stroke="#fff" stroke-width="1.2"/><path d="M1.5 12.2 L13 0.7 M6.5 12.2 L13 5.7 M11.5 12.2 L13 10.7" stroke="#9a9a94" stroke-width="1.5"/></svg>
</body></html>
